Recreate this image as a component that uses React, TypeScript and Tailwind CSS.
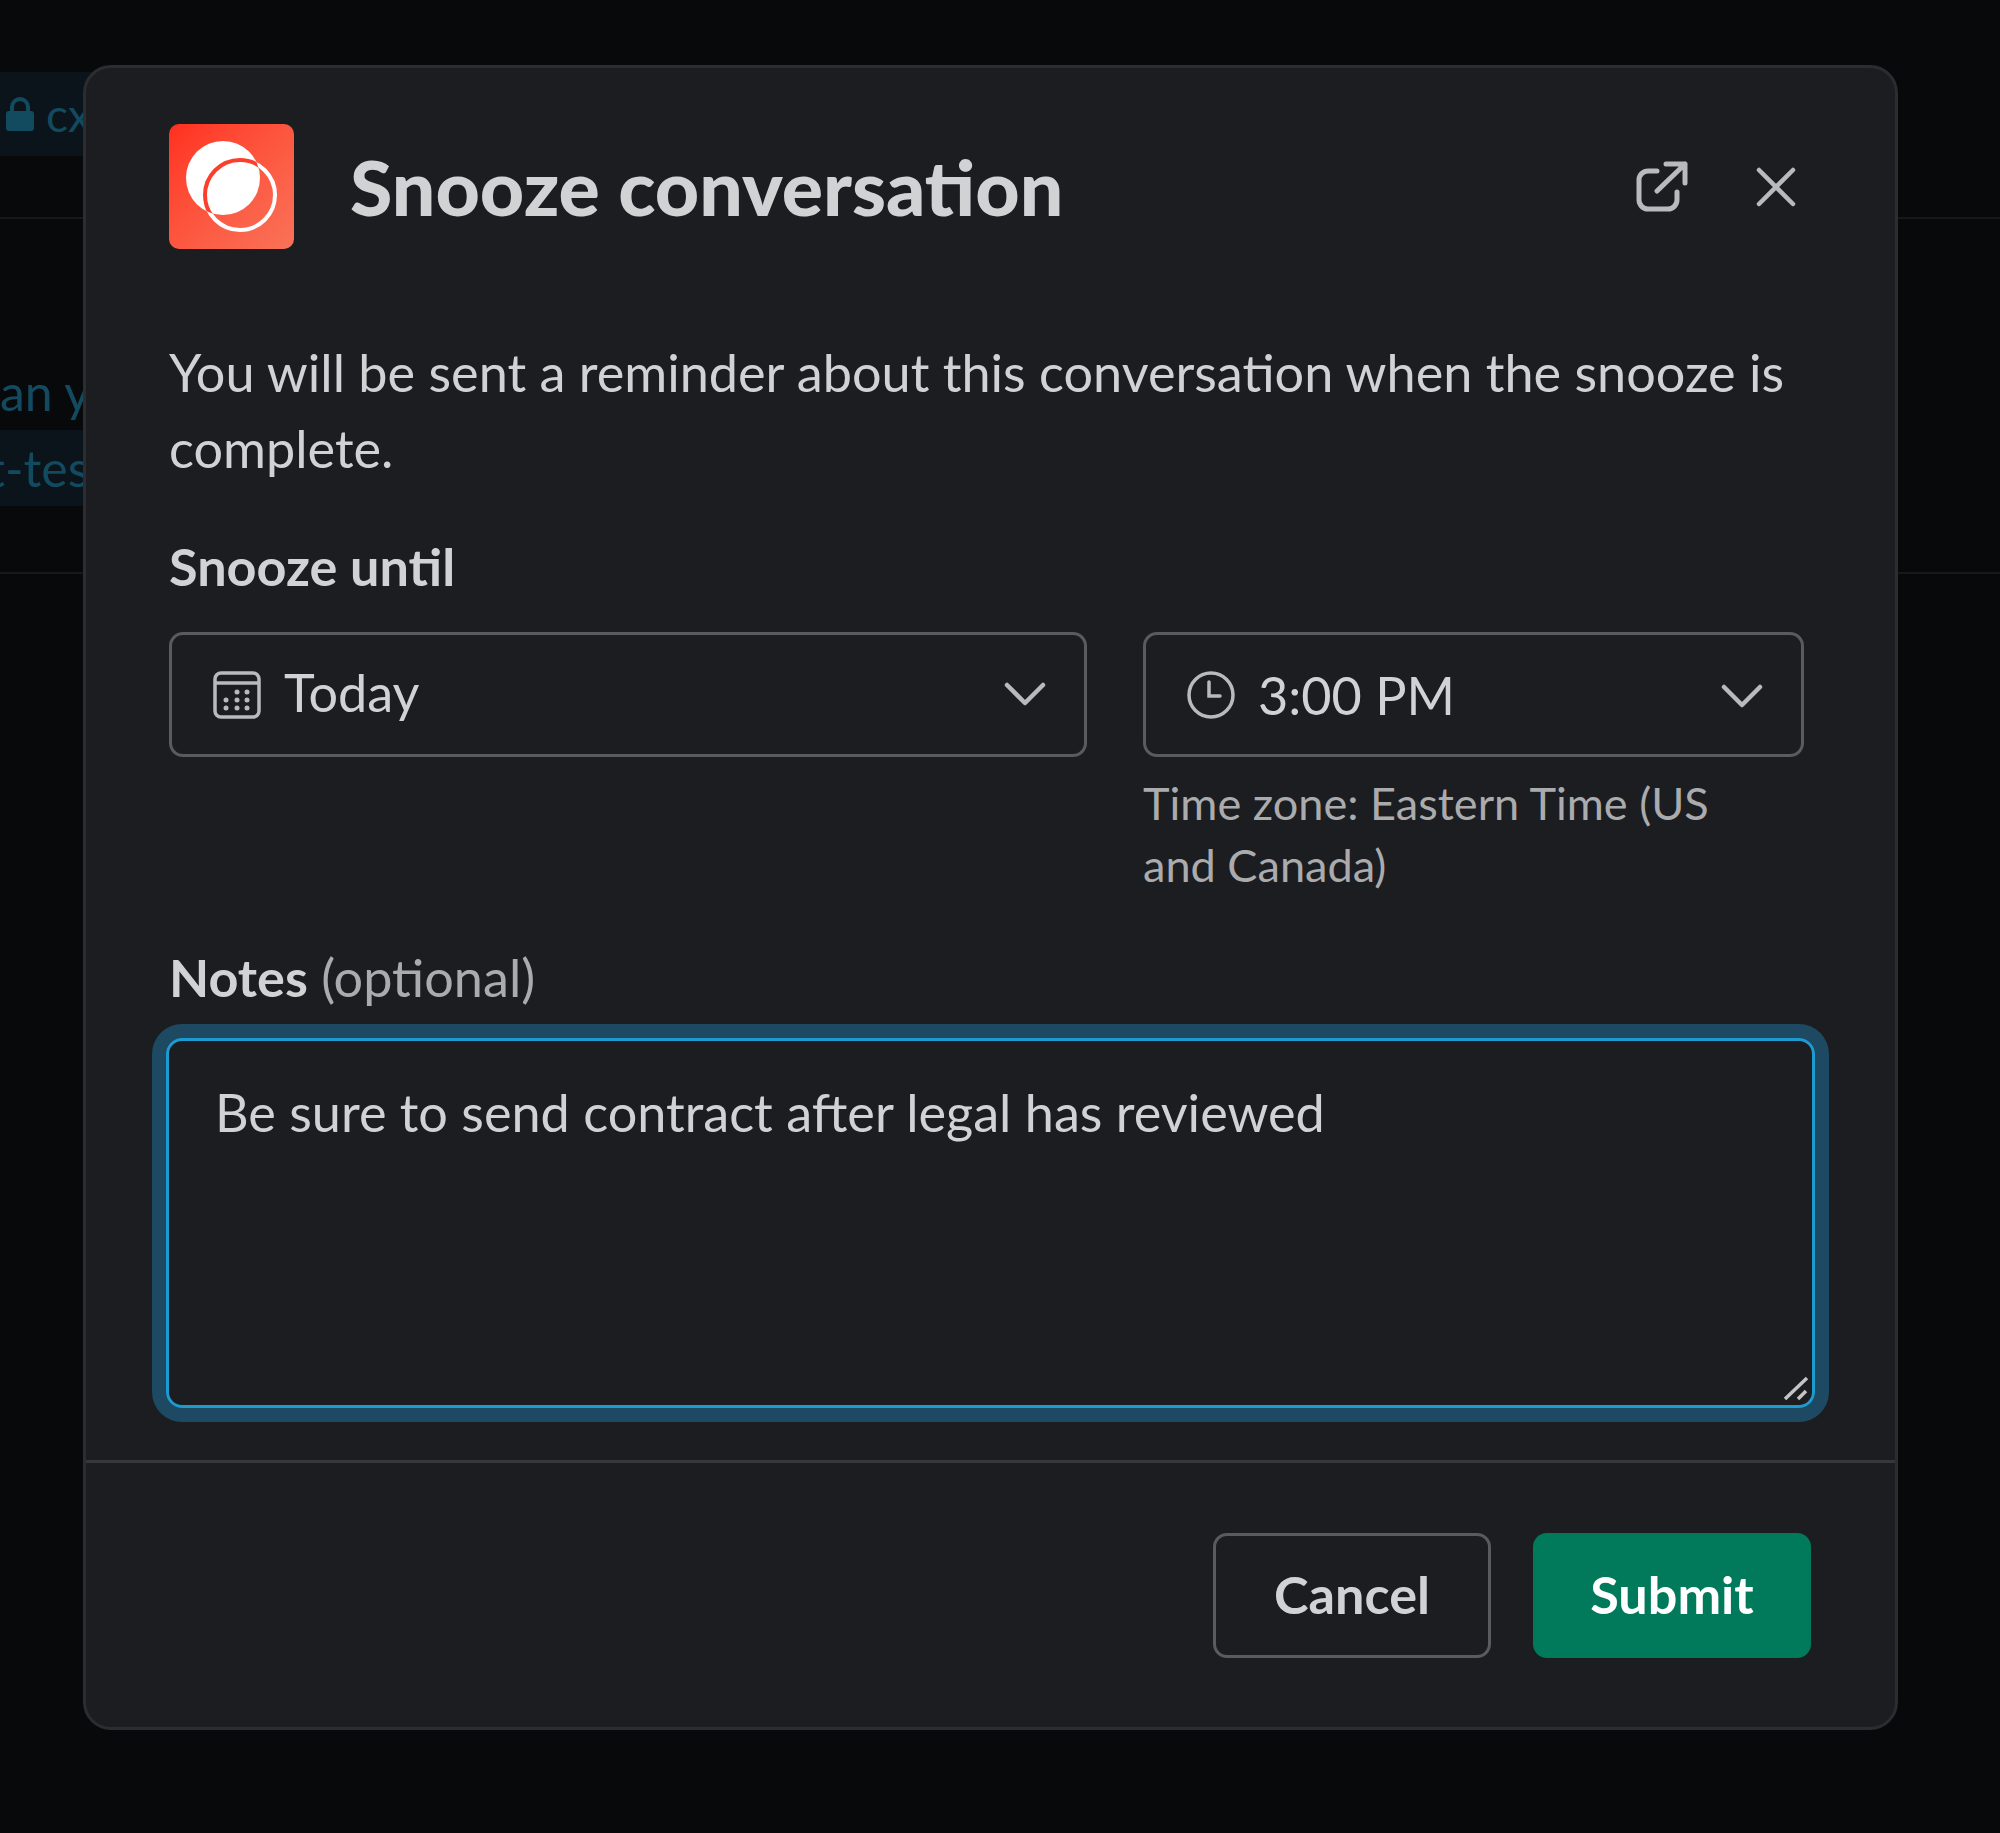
import type { ReactNode } from 'react';

function SelectBox({ icon, label, className, textClass, chevronClass }: { icon: ReactNode; label: string; className: string; textClass?: string; chevronClass?: string }) {
  return (
    <div className={`flex h-[125px] items-center rounded-[14px] border-[3px] border-[#5a5b5e] pl-[41px] pr-[38px] ${className}`}>
      {icon}
      <span className={`flex-1 text-[#d1d2d3] ${textClass ?? ''}`}>{label}</span>
      <svg className={chevronClass} width="42" height="24" viewBox="0 0 42 24" fill="none" stroke="#b9babb" strokeWidth="4.5" strokeLinecap="round" strokeLinejoin="round">
        <path d="M3 3l18 18L39 3" />
      </svg>
    </div>
  );
}

function Logo() {
  return (
    <div className="h-[125px] w-[125px] shrink-0 rounded-[10px] bg-gradient-to-br from-[#ff2e1e] to-[#f97258]">
      <svg width="125" height="125" viewBox="0 0 125 125">
        <defs>
          <clipPath id="blob">
            <circle cx="54" cy="54" r="37" />
          </clipPath>
        </defs>
        <circle cx="71" cy="71" r="35" fill="none" stroke="#fff" strokeWidth="4" />
        <circle cx="54" cy="54" r="37" fill="#fff" />
        <circle cx="71" cy="71" r="35" fill="none" stroke="#fb3f2c" strokeWidth="4" clipPath="url(#blob)" />
      </svg>
    </div>
  );
}

export default function App() {
  return (
    <div className="relative h-[1833px] w-[2000px] overflow-hidden bg-[#08090b] font-['Lato',sans-serif]">
      {/* page behind the dialog */}
      <div className="h-[219px] border-b-[2px] border-[#17181a] pt-[72px]">
        <div className="flex h-[84px] w-[110px] items-center gap-[12px] bg-[#0a141a] pl-[6px] text-[46px] text-[#124a60]">
          <svg width="28" height="34" viewBox="0 0 28 34" fill="#124a60">
            <path d="M4 14V10a10 10 0 0 1 20 0v4h1a3 3 0 0 1 3 3v14a3 3 0 0 1-3 3H3a3 3 0 0 1-3-3V17a3 3 0 0 1 3-3zm4 0h12v-4a6 6 0 0 0-12 0z" />
          </svg>
          cx
        </div>
      </div>
      <div className="h-[355px] border-b-[2px] border-[#17181a] pt-[135px] text-[50px] leading-[76px] text-[#124a60]">
        <div className="whitespace-nowrap">an y</div>
        <div className="w-[110px] whitespace-nowrap bg-[#0a141a]">
          <span className="-ml-[13px] inline-block">t-tes</span>
        </div>
      </div>

      {/* dialog */}
      <div className="absolute left-[83px] top-[65px] flex h-[1665px] w-[1815px] flex-col rounded-[28px] border-[3px] border-[#2c2d30] bg-[#1b1d21] text-[52.2px] text-[#d1d2d3]">
        <header className="flex items-center pl-[83px] pr-[99px] pt-[56px]">
          <Logo />
          <h1 className="ml-[56px] flex-1 pt-[1px] text-[77px] font-black text-[#d1d2d3]">Snooze conversation</h1>
          <svg width="52" height="52" viewBox="0 0 52 52" fill="none" stroke="#b9babb" strokeWidth="5" strokeLinecap="round" strokeLinejoin="round">
            <path d="M21 10h-9a9 9 0 0 0-9 9v20a9 9 0 0 0 9 9h20a9 9 0 0 0 9-9v-8" />
            <path d="M21 30L49 3M30 3h19v19" />
          </svg>
          <svg className="ml-[68px]" width="40" height="40" viewBox="0 0 40 40" fill="none" stroke="#b9babb" strokeWidth="4.5" strokeLinecap="round">
            <path d="M3 3l34 34M37 3L3 37" />
          </svg>
        </header>

        <div className="flex-1 pl-[83px] pr-[80px]">
          <p className="mt-[85px] leading-[76px]">You will be sent a reminder about this conversation when the snooze is complete.</p>
          <label className="mt-[42px] block font-bold leading-[76px]">Snooze until</label>

          <div className="mt-[28px] flex gap-[56px]">
            <SelectBox
              className="w-[918px]"
              label="Today"
              textClass="-mt-[4px]"
              chevronClass="-mt-[2px]"
              icon={
                <svg className="mr-[23px]" width="48" height="48" viewBox="0 0 48 48" fill="none" stroke="#b9babb" strokeWidth="3.5">
                  <rect x="2" y="2" width="44" height="44" rx="6" />
                  <path d="M2 12h44" />
                  <g fill="#b9babb" stroke="none">
                    <circle cx="24" cy="21" r="2.5" /><circle cx="34" cy="21" r="2.5" />
                    <circle cx="13" cy="29" r="2.5" /><circle cx="24" cy="29" r="2.5" /><circle cx="34" cy="29" r="2.5" />
                    <circle cx="13" cy="37" r="2.5" /><circle cx="24" cy="37" r="2.5" /><circle cx="34" cy="37" r="2.5" />
                  </g>
                </svg>
              }
            />
            <div className="w-[661px]">
              <SelectBox
                className="w-full"
                label="3:00 PM"
                textClass="mt-[2px]"
                chevronClass="mt-[2px]"
                icon={
                  <svg className="mr-[23px]" width="48" height="48" viewBox="0 0 48 48" fill="none" stroke="#b9babb" strokeWidth="3.5" strokeLinecap="round">
                    <circle cx="24" cy="24" r="22" />
                    <path d="M22 11v14h11" />
                  </svg>
                }
              />
              <p className="mt-[15px] max-w-[600px] text-[45.1px] leading-[62px] text-[#ababad]">Time zone: Eastern Time (US and Canada)</p>
            </div>
          </div>

          <label className="mt-[43px] block leading-[76px]">
            <span className="font-bold">Notes</span> <span className="text-[#ababad]">(optional)</span>
          </label>

          <div className="relative -ml-[3px] mt-[23px] h-[370px] w-[1649px] rounded-[16px] border-[3px] border-[#1d9bd1] px-[46px] py-[33px] leading-[76px] shadow-[0_0_0_14px_#1d4a62]">
            Be sure to send contract after legal has reviewed
            <svg className="absolute bottom-[3px] right-[3px]" width="26" height="26" viewBox="0 0 26 26" stroke="#c4c4c4" strokeWidth="3.5">
              <path d="M2 23L24 2M15 23l8-8" />
            </svg>
          </div>
        </div>

        <footer className="flex h-[267px] justify-end gap-[42px] border-t-[3px] border-[#35373b] pr-[84px] pt-[70px] font-bold">
          <button className="h-[125px] w-[278px] rounded-[14px] border-[3px] border-[#5a5b5e] pb-[2px] text-[#d1d2d3]">Cancel</button>
          <button className="h-[125px] w-[278px] rounded-[14px] bg-[#007a5a] pb-[2px] text-white">Submit</button>
        </footer>
      </div>
    </div>
  );
}
